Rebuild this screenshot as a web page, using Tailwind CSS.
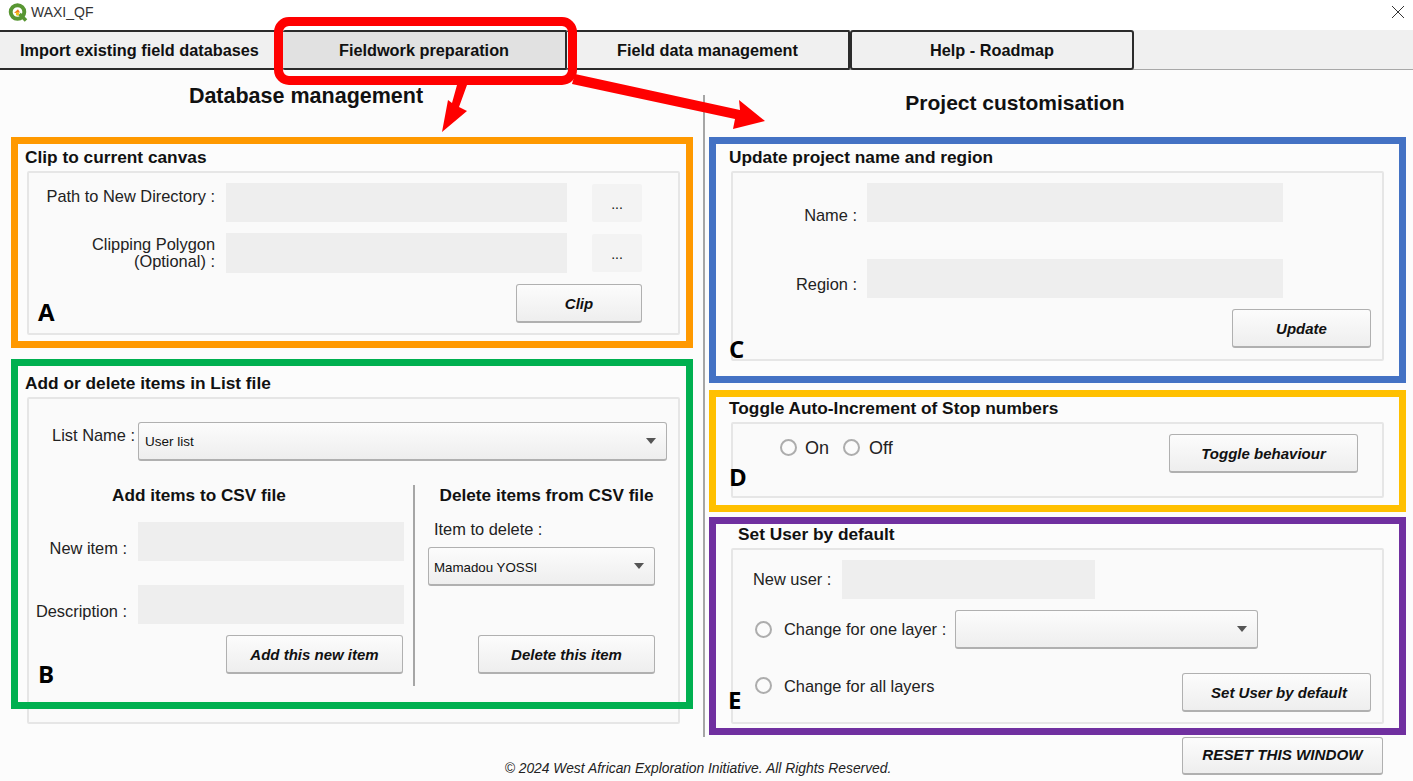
<!DOCTYPE html>
<html lang="en">
<head>
  <meta charset="UTF-8" />
  <meta name="viewport" content="width=device-width, initial-scale=1" />
  <title>WAXI_QF - Fieldwork preparation</title>
  <script src="https://cdn.jsdelivr.net/npm/@tailwindcss/browser@4"></script>
</head>
<body class="bg-[#fcfcfc]">
<div class="relative w-[1413px] h-[781px] overflow-hidden bg-[#fcfcfc] font-['Liberation_Sans',sans-serif] text-[#111]">

  <!-- title bar -->
  <div class="h-[30px] bg-white flex items-center justify-between pl-[8px] pr-[8px]">
    <div class="flex items-center gap-[3px] -mt-[5px]">
      <svg width="20" height="19" viewBox="0 0 20 19">
        <circle cx="9.5" cy="9" r="6.8" fill="none" stroke="#589632" stroke-width="3.9"/>
        <path d="M11.5 11 L18 17.5" stroke="#589632" stroke-width="3.6"/>
        <path d="M6 10 L10 6.2 L12 9.5 Z" fill="#ee7913"/>
        <circle cx="9.5" cy="11" r="1.7" fill="#f0c419"/>
      </svg>
      <span class="text-[14px] text-[#333]">WAXI_QF</span>
    </div>
    <svg width="14" height="14" viewBox="0 0 14 14" class="-mt-[6px]"><path d="M1 1 L13 13 M13 1 L1 13" stroke="#333" stroke-width="1"/></svg>
  </div>

  <!-- tabs -->
  <div class="flex h-[40px] bg-[#f0f0f0] border-b border-[#a8a8a8]">
    <div class="w-[283px] h-[40px] shrink-0 flex items-center pl-[20px] bg-[#f0f0f0] border-y-2 border-r-2 border-[#2b2b2b] rounded-r-[2px] font-bold text-[16.3px]">Import existing field databases</div>
    <div class="w-[284px] h-[40px] shrink-0 flex items-center justify-center bg-[#e1e1e1] border-y-2 border-r-2 border-[#2b2b2b] rounded-[2px] font-bold text-[16.3px]">Fieldwork preparation</div>
    <div class="w-[283px] h-[40px] shrink-0 flex items-center justify-center bg-[#f0f0f0] border-y-2 border-r-2 border-[#2b2b2b] rounded-[2px] font-bold text-[16.3px]">Field data management</div>
    <div class="w-[284px] h-[40px] shrink-0 flex items-center justify-center bg-[#f0f0f0] border-y-2 border-x-2 border-[#2b2b2b] rounded-[3px] font-bold text-[16.3px]">Help - Roadmap</div>
  </div>

  <!-- two columns -->
  <div class="flex h-[667px]">

    <!-- left column -->
    <div class="w-[703px] shrink-0">
      <h1 class="w-[612px] mt-[13px] h-[26px] leading-[26px] text-center font-bold text-[21.5px]">Database management</h1>

      <h2 class="ml-[25px] mt-[38px] h-[20px] leading-[20px] font-bold text-[17.3px]">Clip to current canvas</h2>
      <section class="ml-[27px] mt-[4px] w-[653px] h-[164px] bg-[#fafafa] border-2 border-[#e6e6e6] rounded-[2px] pt-[10px]">
        <div class="flex items-start">
          <div class="w-[186px] pt-[4px] leading-[18px] text-right text-[16.4px] text-[#222]">Path to New Directory :</div>
          <div class="ml-[11px] w-[341px] h-[39px] bg-[#eeeeee]"></div>
          <div class="ml-[25px] mt-[1px] w-[50px] h-[38px] bg-[#f3f3f3] rounded-[2px] flex items-end justify-center pb-[9px] text-[14px] leading-[18px]">...</div>
        </div>
        <div class="flex items-start mt-[11px]">
          <div class="w-[186px] pt-[3px] leading-[17px] text-right text-[16.4px] text-[#222]">Clipping Polygon<br />(Optional) :</div>
          <div class="ml-[11px] w-[341px] h-[40px] bg-[#eeeeee]"></div>
          <div class="ml-[25px] mt-[1px] w-[50px] h-[38px] bg-[#f3f3f3] rounded-[2px] flex items-end justify-center pb-[9px] text-[14px] leading-[18px]">...</div>
        </div>
        <div class="flex justify-end mt-[11px] pr-[36px]">
          <button class="w-[126px] h-[39px] pt-[2px] bg-linear-to-b from-[#fcfcfc] to-[#eeeeee] border border-b-2 border-[#b0b0b0] rounded-[3px] font-bold italic text-[15px]">Clip</button>
        </div>
      </section>

      <h2 class="ml-[25px] mt-[38px] h-[20px] leading-[20px] font-bold text-[17.3px]">Add or delete items in List file</h2>
      <section class="ml-[27px] mt-[4px] w-[653px] h-[327px] bg-[#fafafa] border-2 border-[#e6e6e6] rounded-[2px] pt-[23px]">
        <div class="flex items-start">
          <div class="w-[106px] mt-[4px] leading-[18px] text-right text-[16.4px] text-[#222]">List Name :</div>
          <div class="ml-[3px] w-[529px] h-[39px] flex items-center justify-between pl-[6px] pr-[10px] pt-[3px] bg-linear-to-b from-[#fcfcfc] to-[#eeeeee] border border-b-2 border-[#b0b0b0] rounded-[3px] text-[13.5px]">
            <span>User list</span>
            <svg width="10" height="6" viewBox="0 0 10 6" class="-mt-[3px]"><path d="M0 0 H10 L5 6 Z" fill="#555"/></svg>
          </div>
        </div>
        <div class="flex mt-[24px]">
          <div class="w-[385px] shrink-0">
            <h3 class="w-[340px] h-[20px] leading-[20px] text-center font-bold text-[17.2px]">Add items to CSV file</h3>
            <div class="flex items-start mt-[17px]">
              <div class="w-[98px] pt-[17px] leading-[18px] text-right text-[16.4px] text-[#222]">New item :</div>
              <div class="ml-[11px] w-[266px] h-[39px] bg-[#eeeeee]"></div>
            </div>
            <div class="flex items-start mt-[24px]">
              <div class="w-[98px] pt-[17px] leading-[18px] text-right text-[16.4px] text-[#222]">Description :</div>
              <div class="ml-[11px] w-[266px] h-[39px] bg-[#eeeeee]"></div>
            </div>
            <button class="block ml-[197px] mt-[11px] w-[177px] h-[39px] pt-[2px] bg-linear-to-b from-[#fcfcfc] to-[#eeeeee] border border-b-2 border-[#b0b0b0] rounded-[3px] font-bold italic text-[15px]">Add this new item</button>
          </div>
          <div class="w-[2px] h-[201px] shrink-0 -ml-[1px] bg-[#a6a6a6]"></div>
          <div class="w-[263px] shrink-0">
            <h3 class="h-[20px] leading-[20px] text-center font-bold text-[17.2px]">Delete items from CSV file</h3>
            <div class="ml-[19px] mt-[15px] h-[18px] leading-[18px] text-[16.4px] text-[#222]">Item to delete :</div>
            <div class="ml-[13px] mt-[9px] w-[227px] h-[39px] flex items-center justify-between pl-[5px] pr-[10px] pt-[3px] bg-linear-to-b from-[#fcfcfc] to-[#eeeeee] border border-b-2 border-[#b0b0b0] rounded-[3px] text-[13.3px]">
              <span>Mamadou YOSSI</span>
              <svg width="10" height="6" viewBox="0 0 10 6" class="-mt-[3px]"><path d="M0 0 H10 L5 6 Z" fill="#555"/></svg>
            </div>
            <button class="block ml-[63px] mt-[49px] w-[177px] h-[39px] pt-[2px] bg-linear-to-b from-[#fcfcfc] to-[#eeeeee] border border-b-2 border-[#b0b0b0] rounded-[3px] font-bold italic text-[15px]">Delete this item</button>
          </div>
        </div>
      </section>
    </div>

    <!-- divider -->
    <div class="w-[2px] shrink-0 mt-[25px] bg-[#a6a6a6]"></div>

    <!-- right column -->
    <div class="w-[708px] shrink-0 pl-[1px]">
      <h1 class="w-[618px] mt-[20px] h-[26px] leading-[26px] text-center font-bold text-[21px]">Project customisation</h1>

      <h2 class="ml-[23px] mt-[31px] h-[20px] leading-[20px] font-bold text-[17.3px]">Update project name and region</h2>
      <section class="ml-[25px] mt-[4px] w-[653px] h-[190px] bg-[#fafafa] border-2 border-[#e6e6e6] rounded-[2px] pt-[10px]">
        <div class="flex items-start">
          <div class="w-[124px] pt-[23px] leading-[18px] text-right text-[16.4px] text-[#222]">Name :</div>
          <div class="ml-[10px] w-[416px] h-[39px] bg-[#eeeeee]"></div>
        </div>
        <div class="flex items-start mt-[35px]">
          <div class="w-[124px] pt-[16px] leading-[18px] text-right text-[16.4px] text-[#222]">Region :</div>
          <div class="ml-[10px] w-[416px] h-[39px] bg-[#eeeeee]"></div>
        </div>
        <div class="flex justify-end mt-[11px] pr-[11px]">
          <button class="w-[139px] h-[39px] pt-[2px] bg-linear-to-b from-[#fcfcfc] to-[#eeeeee] border border-b-2 border-[#b0b0b0] rounded-[3px] font-bold italic text-[15px]">Update</button>
        </div>
      </section>

      <h2 class="ml-[23px] mt-[37px] h-[20px] leading-[20px] font-bold text-[17.3px]">Toggle Auto-Increment of Stop numbers</h2>
      <section class="ml-[25px] mt-[4px] w-[653px] h-[76px] bg-[#fafafa] border-2 border-[#e6e6e6] rounded-[2px] pt-[10px] flex items-start justify-between pr-[24px]">
        <div class="flex items-center ml-[47px] mt-[4px] text-[18px] text-[#222]">
          <span class="w-[17px] h-[17px] rounded-full border-2 border-[#adadad] bg-[#fbfbfb]"></span>
          <span class="ml-[8px] w-[25px] pt-[1px] leading-[18px]">On</span>
          <span class="ml-[13px] w-[17px] h-[17px] rounded-full border-2 border-[#adadad] bg-[#fbfbfb]"></span>
          <span class="ml-[9px] pt-[1px] leading-[18px]">Off</span>
        </div>
        <button class="w-[189px] h-[39px] pt-[2px] bg-linear-to-b from-[#fcfcfc] to-[#eeeeee] border border-b-2 border-[#b0b0b0] rounded-[3px] font-bold italic text-[15px]">Toggle behaviour</button>
      </section>

      <h2 class="ml-[32px] mt-[26px] h-[20px] leading-[20px] font-bold text-[17.3px]">Set User by default</h2>
      <section class="ml-[25px] mt-[4px] w-[653px] h-[176px] bg-[#fafafa] border-2 border-[#e6e6e6] rounded-[2px] pt-[10px]">
        <div class="flex items-center pl-[20px]">
          <div class="w-[78px] -mt-[1px] text-[16.4px] text-[#222] whitespace-nowrap">New user :</div>
          <div class="ml-[11px] w-[253px] h-[39px] bg-[#eeeeee]"></div>
        </div>
        <div class="flex items-center pl-[22px] mt-[11px]">
          <span class="w-[17px] h-[17px] shrink-0 rounded-full border-2 border-[#adadad] bg-[#fbfbfb]"></span>
          <div class="ml-[12px] w-[163px] text-[16.4px] text-[#222] whitespace-nowrap">Change for one layer :</div>
          <div class="ml-[8px] w-[303px] h-[39px] flex items-center justify-end pr-[10px] bg-linear-to-b from-[#fcfcfc] to-[#eeeeee] border border-b-2 border-[#b0b0b0] rounded-[3px]">
            <svg width="10" height="6" viewBox="0 0 10 6"><path d="M0 0 H10 L5 6 Z" fill="#555"/></svg>
          </div>
        </div>
        <div class="flex items-start justify-between pl-[22px] pr-[11px] mt-[24px]">
          <div class="flex items-center">
            <span class="w-[17px] h-[17px] shrink-0 rounded-full border-2 border-[#adadad] bg-[#fbfbfb]"></span>
            <div class="ml-[12px] pt-[1px] text-[16.4px] text-[#222]">Change for all layers</div>
          </div>
          <button class="w-[189px] h-[39px] pt-[2px] pl-[5px] bg-linear-to-b from-[#fcfcfc] to-[#eeeeee] border border-b-2 border-[#b0b0b0] rounded-[3px] font-bold italic text-[15px]">Set User by default</button>
        </div>
      </section>
    </div>
  </div>

  <!-- footer -->
  <div class="flex items-start">
    <div class="w-[1182px] shrink-0 pl-[214px] pt-[23px] leading-[16px] text-center italic text-[13.85px] text-[#222]">© 2024 West African Exploration Initiative. All Rights Reserved.</div>
    <button class="w-[201px] h-[38px] bg-linear-to-b from-[#fcfcfc] to-[#eeeeee] border border-b-2 border-[#b0b0b0] rounded-[3px] font-bold italic text-[15.2px]">RESET THIS WINDOW</button>
  </div>

  <!-- annotations drawn on top of the screenshot -->
  <div class="absolute left-[11px] top-[137px] w-[682px] h-[211px] border-[7px] border-[#ff9900]"></div>
  <div class="absolute left-[11px] top-[359px] w-[682px] h-[350px] border-[7px] border-[#00b050]"></div>
  <div class="absolute left-[709px] top-[137px] w-[697px] h-[246px] border-[7px] border-[#4472c4]"></div>
  <div class="absolute left-[709px] top-[390px] w-[697px] h-[122px] border-[7px] border-[#ffc000]"></div>
  <div class="absolute left-[709px] top-[517px] w-[697px] h-[218px] border-[7px] border-[#7030a0]"></div>
  <div class="absolute left-[274px] top-[17px] w-[303px] h-[68px] border-[9px] border-[#ff0000] rounded-[15px]"></div>
  <svg class="absolute left-0 top-0" width="1413" height="781" viewBox="0 0 1413 781">
    <polygon points="457,85 467,85 459,107 467,111 442,132 448,100 452,103" fill="#ff0000"/>
    <polygon points="575,74 740,110 739,100 765,121 733,129 735,119 572,84" fill="#ff0000"/>
  </svg>
  <span class="absolute left-[38px] top-[296px] font-['Open_Sans',sans-serif] font-bold text-[24px] leading-[32px] text-black">A</span>
  <span class="absolute left-[38px] top-[658px] font-['Open_Sans',sans-serif] font-bold text-[24px] leading-[32px] text-black">B</span>
  <span class="absolute left-[729px] top-[333px] font-['Open_Sans',sans-serif] font-bold text-[24px] leading-[32px] text-black">C</span>
  <span class="absolute left-[729px] top-[461px] font-['Open_Sans',sans-serif] font-bold text-[24px] leading-[32px] text-black">D</span>
  <span class="absolute left-[728px] top-[684px] font-['Open_Sans',sans-serif] font-bold text-[24px] leading-[32px] text-black">E</span>
</div>
</body>
</html>
